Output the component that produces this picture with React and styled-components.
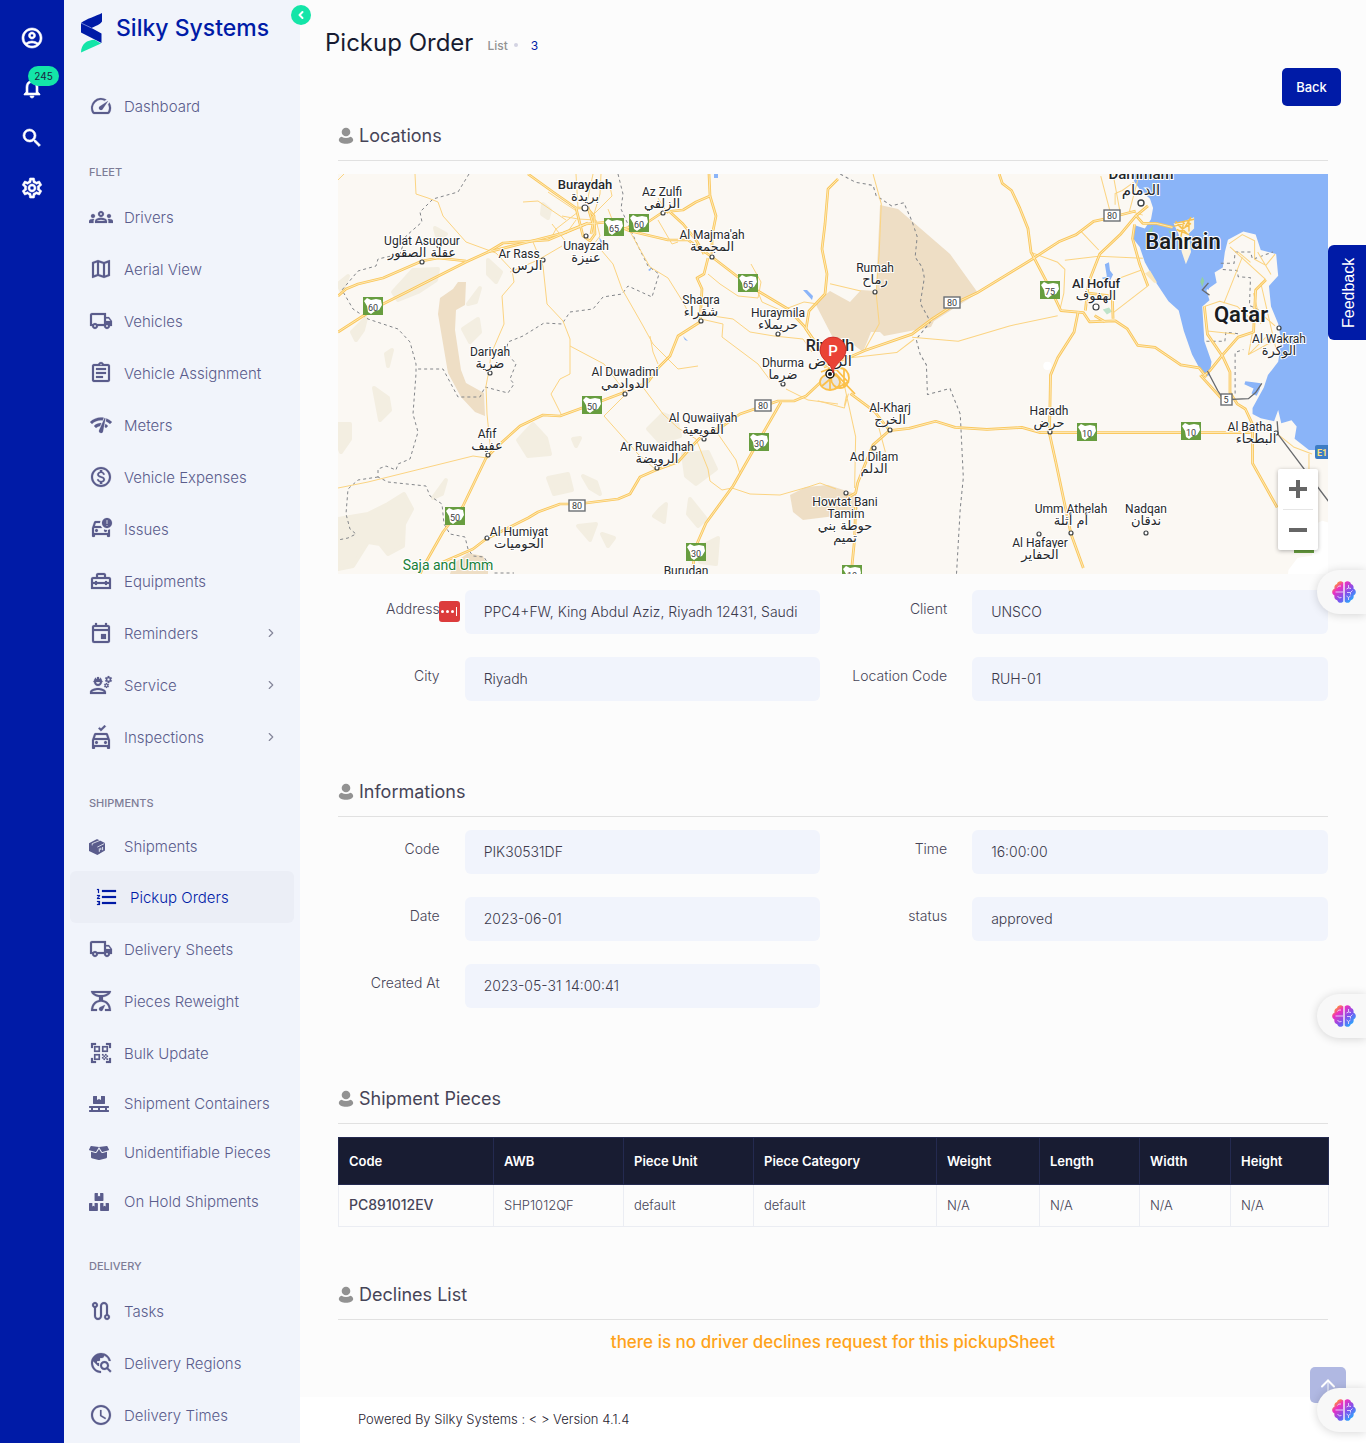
import React from 'react'
import styled, { createGlobalStyle } from 'styled-components'
import {
  MdOutlineAccountCircle,
  MdNotificationsNone,
  MdSearch,
  MdOutlineSettings,
  MdSpeed,
  MdOutlineGroups,
  MdOutlineMap,
  MdOutlineLocalShipping,
  MdOutlineAssignment,
  MdNetworkCheck,
  MdOutlineMonetizationOn,
  MdOutlineCarCrash,
  MdOutlineHomeRepairService,
  MdOutlineEvent,
  MdOutlineEngineering,
  MdOutlineNoCrash,
  MdFormatListNumbered,
  MdOutlineScale,
  MdQrCodeScanner,
  MdOutlineRoute,
  MdTravelExplore,
  MdAccessTime,
} from 'react-icons/md'
import { FaPallet, FaBoxOpen, FaBoxes } from 'react-icons/fa'
import { ChevronLeft, ChevronRight } from 'lucide-react'

const BoxIcon = () => (
  <svg width="16" height="16" viewBox="0 0 16 16" fill="currentColor">
    <path d="M0 4.2 7.6.3a1 1 0 0 1 .9 0L16 4v7.6L8.4 16 0 12z" />
    <path d="M3.2 6.4V4.6L11 1.4M8.3 8.1l7-3.5" fill="none" stroke="#f1f4fb" strokeWidth=".8" />
    <path d="M10.3 9.4v3.4M11.8 8.8v2.2M13.6 8v3.2" fill="none" stroke="#f1f4fb" strokeWidth=".9" />
  </svg>
)

const menu = [
  { items: [{ label: 'Dashboard', icon: MdSpeed }] },
  {
    title: 'Fleet',
    items: [
      { label: 'Drivers', icon: MdOutlineGroups },
      { label: 'Aerial View', icon: MdOutlineMap },
      { label: 'Vehicles', icon: MdOutlineLocalShipping },
      { label: 'Vehicle Assignment', icon: MdOutlineAssignment },
      { label: 'Meters', icon: MdNetworkCheck },
      { label: 'Vehicle Expenses', icon: MdOutlineMonetizationOn },
      { label: 'Issues', icon: MdOutlineCarCrash },
      { label: 'Equipments', icon: MdOutlineHomeRepairService },
      { label: 'Reminders', icon: MdOutlineEvent, more: true },
      { label: 'Service', icon: MdOutlineEngineering, more: true },
      { label: 'Inspections', icon: MdOutlineNoCrash, more: true },
    ],
  },
  {
    title: 'Shipments',
    items: [
      { label: 'Shipments', icon: BoxIcon, small: true },
      { label: 'Pickup Orders', icon: MdFormatListNumbered, active: true },
      { label: 'Delivery Sheets', icon: MdOutlineLocalShipping },
      { label: 'Pieces Reweight', icon: MdOutlineScale },
      { label: 'Bulk Update', icon: MdQrCodeScanner },
      { label: 'Shipment Containers', icon: FaPallet, small: true },
      { label: 'Unidentifiable Pieces', icon: FaBoxOpen, small: true },
      { label: 'On Hold Shipments', icon: FaBoxes, small: true },
    ],
  },
  {
    title: 'Delivery',
    items: [
      { label: 'Tasks', icon: MdOutlineRoute },
      { label: 'Delivery Regions', icon: MdTravelExplore },
      { label: 'Delivery Times', icon: MdAccessTime },
    ],
  },
]

const locationFields = [
  { id: 'address', label: 'Address', value: 'PPC4+FW, King Abdul Aziz, Riyadh 12431, Saudi', badge: true },
  { id: 'client', label: 'Client', value: 'UNSCO' },
  { id: 'city', label: 'City', value: 'Riyadh' },
  { id: 'location-code', label: 'Location Code', value: 'RUH-01' },
]

const infoFields = [
  { id: 'code', label: 'Code', value: 'PIK30531DF' },
  { id: 'time', label: 'Time', value: '16:00:00' },
  { id: 'date', label: 'Date', value: '2023-06-01' },
  { id: 'status', label: 'status', value: 'approved' },
  { id: 'created', label: 'Created At', value: '2023-05-31 14:00:41' },
]

const columns = [
  { name: 'Code', width: 155 },
  { name: 'AWB', width: 130 },
  { name: 'Piece Unit', width: 130 },
  { name: 'Piece Category', width: 183 },
  { name: 'Weight', width: 103 },
  { name: 'Length', width: 100 },
  { name: 'Width', width: 91 },
  { name: 'Height', width: 98 },
]

const piece = ['PC891012EV', 'SHP1012QF', 'default', 'default', 'N/A', 'N/A', 'N/A', 'N/A']

// ---- map data ----

const westMajor = [
  'M0 158 25 142 45 130 128 88 150 78 165 69 210 66 248 50 270 48 292 57 330 66 350 66 374 83 400 103 420 117 450 135 466 152 480 172 488 186 494 200',
  'M0 122 8 115 20 110 45 104 84 87 100 84 128 87',
  'M150 78 190 68 225 59 250 49',
  'M190 0 215 18 238 34 245 62 252 67 257 60 256 42 249 34 238 34',
  'M250 33 255 50 253 60',
  'M285 55 310 48 325 38 345 36 358 28 372 22 371 0',
  'M372 22 378 42 374 62 374 80',
  'M332 38 345 50 358 66 366 80',
  'M370 84 366 100 359 104 364 115 362 148 340 162 332 182 321 193 310 208 287 218 266 226 222 242 205 241 182 252 162 270 148 284 125 332 105 358 88 388 82 400',
  'M500 5 490 15 487 50 484 75 489 100 487 120 471 137 468 155 478 170 492 190',
  'M485 206 468 222 456 227 440 227 402 240 385 252 364 262 356 270 340 288 318 296 302 303 292 320 280 325 240 330 222 330 200 338 190 344 166 356 148 365 135 375 105 388',
  'M443 228 420 268 395 312 368 349 358 372 355 392',
]

const westMinor = [
  'M77 0 78 20 90 24 100 28 105 42 128 68 158 79 174 96 176 108 164 122 166 150 153 180 151 196 148 212 149 240 153 280',
  'M0 6 6 0',
  'M195 68 205 92 209 130 225 147 232 165 232 200 222 205 213 220 224 242',
  'M172 98 200 86 224 72',
  'M258 70 275 90 284 115 304 150 315 170 340 195 360 192',
  'M232 172 266 190 285 215 286 222 266 242 300 280 318 296',
  'M290 54 300 72 312 93 330 104 345 128 352 142',
  'M370 100 382 110 400 122 420 124 423 108 413 90',
  'M363 145 385 150 384 163 420 190 432 206',
  'M375 142 395 145 412 158 436 162 465 165 474 178',
  'M312 162 315 178 320 190',
  'M304 212 325 240 340 254 358 265 370 295 372 307 384 316 394 314 412 320 442 321 470 313 482 309 498 315',
  'M380 260 398 286 402 300',
  'M185 28 200 27 228 46 M210 18 240 38 218 55 212 66 M238 0 240 34 M255 0 248 33 M263 0 262 20 256 40 274 22 271 8 M270 35 276 50',
  'M224 42 240 45 258 46 262 62 256 70 M228 60 238 46 M214 50 228 68',
  'M320 46 334 70 340 68 M320 24 330 40',
  'M0 314 30 308 135 282 149 284',
  'M448 215 470 226 500 230 M450 134 466 128 480 130 M420 118 424 128 460 144',
]

const eastMajor = [
  'M-6 192 20 182 34 176 80 160 100 145 128 127 143 120 197 87 223 70 240 63 257 50 267 48 298 40',
  'M165 4 168 13 177 20 185 37 193 57 196 80 217 120 225 137 247 139 253 148 278 147 290 155 300 171 317 173 342 190 360 193 367 202',
  'M249 137 252 110 263 82 283 63 298 45 310 35',
  'M297 53 295 67 302 92 310 113',
  'M242 138 238 158 222 183 215 200 214 257 220 284 235 355 247 388',
  'M20 218 43 235 58 254 77 252 103 245 122 251 153 253 187 251 205 256 245 256 410 256',
  'M58 254 42 268 35 285 27 305 25 315 16 320M25 325 24 360 21 390',
  'M365 133 368 160 383 182 390 197 390 217 397 228 405 233 412 248 412 286 436 329',
  'M363 202 370 196 383 180 398 163 413 158 415 117 425 107',
  'M361 200 382 223',
  'M275 118 276 145 M252 120 275 123 M258 142 268 148',
  'M318 52 334 56 M298 44 305 52 318 52',
]

const eastMinor = [
  'M42 4 50 33 48 80 45 120 48 150 34 175',
  'M80 163 125 167 175 152 222 142M20 183 65 178 82 165',
  'M0 111 30 118',
  'M195 80 222 90 229 97 228 120 224 137M229 88 262 84 305 86M245 60 262 78',
  'M275 140 310 113M278 107 305 97',
  'M276 4 283 42M264 6 273 40M300 10 292 40 305 44M296 12 285 20 278 23 278 34',
  'M389 72 402 63 414 69 414 87 425 93 434 82M390 75 425 107M402 85 384 130M398 80 410 90M417 80 430 102',
  'M368 157 395 160M365 133 380 128 397 133 410 145M420 140 434 152M408 180 428 160M412 158 408 180 430 168',
  'M420 110 428 145 435 175M413 120 420 150',
  'M2 200 14 210 25 260 24 310M-12 225 14 232 18 218M46 245 54 275M14 230 16 220',
  'M437 258 452 270 470 277M467 277 467 294',
]

const cityStreets = 'M336 52 355 48M340 60 352 52M338 58 350 63M345 50 342 66M350 48 350 60M340 54 348 62M337 50 346 60M352 46 346 56M335 55 346 52'

const westBorders = [
  'M131 0 120 18 95 25 82 38 84 48 68 62 62 80 40 85 38 92 20 97 4 116 15 135 30 145 60 155 72 168 78 190 78 200 75 240 80 258 72 285 60 290 58 296 48 292 40 295 40 303 50 308 88 312 92 322 104 330 106 350 112 360 127 363 130 375 135 382 146 383 156 399 176 399',
  'M280 0 285 20 283 35 300 72 310 92 321 100 314 123 290 112 284 120 265 123 255 135 232 138 224 150 206 149 185 162 170 168 168 178 178 190 172 205 176 210 170 219 147 213 142 223 120 223 105 195 78 195',
  'M40 303 20 306 10 315 8 340 12 355 18 360 10 364 0 366',
]

const eastBorders = [
  'M10 4 25 12 42 15 45 25 60 35 72 32 80 50 85 65 83 85 90 95 92 105 88 130 98 148 84 165 88 180 94 190 95 219 117 213 127 238 130 300 127 330 123 400',
  'M381 91 394 91 395 80 410 80 412 87 432 80M383 97 397 98 398 104 410 105 409 132 425 140M367 167 385 167 386 158 400 160M395 218 395 178 403 175',
]

const deserts = [
  '115,115 120,108 128,108 127,131 118,136 117,156 123,196 128,209 146,219 147,242 137,238 123,223 110,199 100,140 102,124',
  '452,321 468,313 490,311 518,320 520,335 505,341 465,346 455,338',
  '115,390 130,379 145,382 150,394 150,400 112,400',
  '542,31 560,35 612,80 640,119 596,147 593,153 546,162 542,158 533,158 525,178 512,168 494,162 477,129 492,117 512,128 523,116 538,117',
]

const patches = [
  '55,118 75,96 100,95 98,106 80,118 60,126', '97,54 108,60 100,66', '150,86 163,98 158,108 150,100',
  '130,130 142,114 138,128', '14,158 28,144 25,156 18,166', '125,155 140,145 142,158 132,168',
  '48,180 54,176 50,192', '36,214 50,224 52,236 42,246', '0,250 12,250 12,265 3,278 0,270',
  '0,345 30,340 50,330 66,320 74,335 66,350 65,372 50,380 42,370 30,368 15,392 0,395',
  '180,266 195,250 208,264 212,280 190,282', '210,304 230,300 234,316 216,320', '245,302 258,308 262,320 252,314',
  '95,324 108,306 104,320', '310,255 325,240 338,245 342,262 322,268', '345,280 370,278 378,295 358,310 348,302',
  '322,335 328,330 326,348 316,342', '240,352 258,350 252,366', '264,360 276,364 270,372', '352,325 368,345 360,352 350,340',
  '364,372 380,364 378,390 362,388', '205,30 212,36 210,44 204,40', '0,110 10,102 4,118', '235,265 242,264 238,272',
]

const places = [
  { name: 'Buraydah', ar: 'بريدة', x: 247, y: 15, size: 13, bold: true, dot: [247, 34] },
  { name: 'Az Zulfi', ar: 'الزلفي', x: 324, y: 22, dot: [325, 39] },
  { name: 'Unayzah', ar: 'عنيزة', x: 248, y: 76, dot: [248, 62] },
  { name: 'Uglat Asugour', ar: 'عقلة الصقور', x: 84, y: 71, dot: [84, 88] },
  { name: 'Ar Rass', ar: 'الرس', x: 181, y: 84, arX: 189, dot: [205, 86] },
  { name: "Al Majma'ah", ar: 'المجمعة', x: 374, y: 65, dot: [374, 83] },
  { name: 'Rumah', ar: 'رماح', x: 537, y: 98, dot: [537, 118] },
  { name: 'Shaqra', ar: 'شقراء', x: 363, y: 130, dot: [363, 147] },
  { name: 'Huraymila', ar: 'حريملاء', x: 440, y: 143, dot: [440, 160] },
  { name: 'Dariyah', ar: 'ضرية', x: 152, y: 182, dot: [152, 199] },
  { name: 'Dhurma', ar: 'ضرما', x: 445, y: 193, dot: [445, 210] },
  { name: 'Al Duwadimi', ar: 'الدوادمي', x: 287, y: 202, dot: [287, 220] },
  { name: 'Al Quwaiiyah', ar: 'القويعية', x: 365, y: 248, dot: [366, 265] },
  { name: 'Ar Ruwaidhah', ar: 'الرويضة', x: 319, y: 277, dot: [319, 294] },
  { name: 'Afif', ar: 'عفيف', x: 149, y: 264, dot: [150, 281] },
  { name: 'Al Humiyat', ar: 'الحوميات', x: 181, y: 362, arX: 181, dot: [149, 364] },
  { name: 'Al-Kharj', ar: 'الخرج', x: 552, y: 238, dot: [552, 256] },
  { name: 'Ad Dilam', ar: 'الدلم', x: 536, y: 287, dot: [536, 274] },
  { name: 'Haradh', ar: 'حرض', x: 711, y: 241, dot: [712, 258] },
  { name: 'Al Hofuf', ar: 'الهفوف', x: 758, y: 114, size: 13, bold: true, dot: [758, 133] },
  { name: 'Al Wakrah', ar: 'الوكرة', x: 941, y: 169, dot: [941, 154] },
  { name: 'Al Batha', ar: 'البطحاء', x: 912, y: 257, arX: 918, dot: [938, 259] },
  { name: 'Umm Athelah', ar: 'أم أثلة', x: 733, y: 339, dot: [733, 359] },
  { name: 'Nadqan', ar: 'ندقان', x: 808, y: 339, dot: [808, 359] },
  { name: 'Al Hafayer', ar: 'الحفاير', x: 702, y: 373, dot: [701, 360] },
]

const shields = [
  [35, 132, 60], [276, 53, 65], [301, 49, 60], [410, 109, 65], [254, 231, 50], [421, 268, 30], [117, 342, 50],
  [358, 378, 30], [514, 400, 10], [712, 116, 75], [749, 258, 10], [853, 257, 10],
]

const roadSigns = [[774, 41, 80], [614, 128, 80], [425, 231, 80], [239, 331, 80], [888, 225, 5]]

const Roads = ({ major, minor, borders }) => (
  <g fill="none" strokeLinejoin="round">
    {borders.map((d) => <path key={d} d={d} stroke="#83868a" strokeDasharray="3 3" />)}
    {minor.map((d) => <path key={d} d={d} stroke="#fbd482" strokeWidth="1" />)}
    {major.map((d) => <path key={d} d={d} stroke="#fac75c" strokeWidth="2.7" />)}
    {major.map((d) => <path key={d} d={d} stroke="#fdecc0" strokeWidth=".9" />)}
  </g>
)

const RegionMap = () => (
  <MapCanvas viewBox="0 0 990 400" preserveAspectRatio="xMidYMid slice" role="img" aria-label="Map of pickup locations">
    <rect width="990" height="400" fill="#fbf8f3" />
    {patches.map((p) => <polygon key={p} points={p} fill="#f3eee1" strokeLinejoin="round" stroke="#f3eee1" strokeWidth="4" />)}
    {deserts.map((p) => <polygon key={p} points={p} fill="#eedec5" />)}
    <path d="M376 0h4v4h-4zM465 116l4 0 6 6-1 4zM261 63l3 4-1 5zM310 96l4-3-2 4zM345 162l5 5-3-1z" fill="#8ab4f8" />
    <g transform="translate(492 -4) scale(1.0256)">
      <path
        d="M294 4 297 12 303 20 312 28 315 37 313 48 307 57 298 54 295 66 302 75 307 90 318 110 330 128 340 137 345 157 353 180 365 202 370 200 372 187 365 167 363 133 370 127 367 117 377 110 375 100 383 95 385 80 388 68 403 60 415 63 420 78 435 82 437 103 428 113 430 133 437 150 440 167 437 187 427 200 423 212 412 232 412 238 420 242 433 245 437 234 440 247 450 244 455 250 453 262 467 273 486 273 500 273 500 0 294 0z"
        fill="#8ab4f8"
      />
      <path d="M268 92l4-2 1 8 3 4-3 6-7-2-1-1 5-1zM405 206l8 1 7 1-1 6-3 6-5-2 2-5-9-4zM367 106l4 5-2 6-3-4z" fill="#8ab4f8" />
      <path d="M335 52 345 50 355 46 355 57 350 62 352 80 347 92 343 80 340 63z" fill="#fbf3df" />
      <path d="M312 98l7 12-3 0-9-9z" fill="#f9e7bd" />
      <path d="M310 60l5-6-1 7-4 7zM330 58l4 4-3 0zM363 104l2 4-2 6-2-5z" fill="#93cfa5" />
      <path d="M266 136l6-2 3 4-5 3z" fill="#bfe3c9" />
      <circle cx="212" cy="191" r="4" fill="#fff" />
      <path d="M474 345 480 342 490 345 490 410 445 410 447 390 456 378 470 376z" fill="#fff" />
      <Roads major={eastMajor} minor={eastMinor} borders={eastBorders} />
      <path d={cityStreets} fill="none" stroke="#f6c04f" strokeWidth="1.4" />
      <path d="M368 196 378 215 384 224 408 223 415 217 421 208M436 245 437 258 486 323M369 110 363 117 370 122" fill="none" stroke="#686a6d" strokeWidth="1.3" />
    </g>
    <Roads major={westMajor} minor={westMinor} borders={westBorders} />
    <g fill="none" stroke="#fbc04a" strokeWidth="1.8">
      <ellipse cx="492" cy="208" rx="10" ry="8" fill="#e8e6e2" />
      <ellipse cx="502" cy="204" rx="9" ry="10" />
      <path d="M483 198 496 193 510 208 497 215M484 212 498 200 517 220M492 216V195M506 213V195" />
    </g>

    <rect x="956" y="362" width="20" height="17" fill="#679d3f" />
    {shields.map(([x, y, n]) => (
      <g key={`${x}-${y}`} transform={`translate(${x} ${y})`}>
        <rect x="-10" y="-9" width="20" height="18" fill="#679d3f" />
        <path d="M-9-5-6-8-2-6 3-7 8-6 9-1 6 4 2 5-2 8-5 6-6 0z" fill="#fff" />
        <ShieldText y="5">{n}</ShieldText>
      </g>
    ))}
    {roadSigns.map(([x, y, n]) => (
      <g key={`${x}-${y}`} transform={`translate(${x} ${y})`}>
        <rect x={n > 9 ? -8 : -5} y="-5" width={n > 9 ? 16 : 11} height="11" fill="#fff" stroke="#6c6f73" strokeWidth="1.4" />
        <ShieldText y="4">{n}</ShieldText>
      </g>
    ))}
    <rect x="977" y="271" width="18" height="14" rx="2" fill="#3d7cc4" />
    <RouteText x="984" y="282">E1</RouteText>

    {places.map((p) => (
      <g key={p.name}>
        <circle cx={p.dot[0]} cy={p.dot[1]} r={p.bold ? 3 : 2} fill="#fff" stroke="#3c4043" strokeWidth="1.2" />
        <PlaceText x={p.x} y={p.y} $size={p.size} $bold={p.bold}>{p.name}</PlaceText>
        <ArabicText x={p.arX || p.x} y={p.y + 12} $size={13}>{p.ar}</ArabicText>
      </g>
    ))}
    <PlaceText x="803" y="5" $size={15} $bold>Dammam</PlaceText>
    <ArabicText x="803" y="21" $size={15}>الدمام</ArabicText>
    <circle cx="803" cy="29" r="3" fill="#fff" stroke="#3c4043" strokeWidth="1.4" />
    <CountryText x="845" y="75">Bahrain</CountryText>
    <CountryText x="903" y="148">Qatar</CountryText>
    <PlaceText x="492" y="177" $size={16} $bold>Riyadh</PlaceText>
    <ArabicText x="492" y="192" $size={15}>الرياض</ArabicText>
    <PlaceText x="507" y="332">Howtat Bani</PlaceText>
    <PlaceText x="508" y="344">Tamim</PlaceText>
    <ArabicText x="507" y="356" $size={13}>حوطة بني</ArabicText>
    <ArabicText x="507" y="368" $size={13}>تميم</ArabicText>
    <circle cx="508" cy="319" r="2" fill="#fff" stroke="#3c4043" strokeWidth="1.2" />
    <PlaceText x="110" y="396" $size={14} $green>Saja and Umm</PlaceText>
    <PlaceText x="348" y="401">Burudan</PlaceText>

    <circle cx="492" cy="200" r="4" fill="#fff" stroke="#111" strokeWidth="1.4" />
    <circle cx="492" cy="200" r="2" fill="#111" />
    <path d="M495 199C494 189 482 186 482 176a13 13 0 0 1 26 0c0 10-12 13-13 23z" fill="#ea4335" stroke="#c5221f" strokeWidth=".8" />
    <PinText x="495" y="182">P</PinText>
  </MapCanvas>
)

const PersonIcon = () => (
  <svg width="16" height="18" viewBox="0 0 16 18" fill="#929292">
    <circle cx="8" cy="5" r="4.3" />
    <path d="M3.5 9.7Q8 12.4 12.5 9.7C14 10 15.2 11.6 15.2 13c0 2.4-3.5 3.8-7.2 3.8S.8 15.4.8 13c0-1.4 1.2-3 2.7-3.3z" />
  </svg>
)

const Logo = () => (
  <svg width="23" height="40" viewBox="0 0 23 40">
    <path d="M22 0C16 3 6 6 1 10v9.5L21.500 30V20.500L11.500 15C16 12.500 19.500 12 22 8.500z" fill="#001ba7" />
    <path d="M1 10 11.5 15" stroke="#8d9ce0" strokeWidth=".8" />
    <path d="M14.5 26.800C7 27 1 31 1 39.500L21 30.500z" fill="#14e5a8" />
  </svg>
)

const ToTopIcon = () => (
  <svg width="20" height="20" viewBox="0 0 20 20" fill="none" stroke="currentColor" strokeWidth="2" strokeLinecap="round">
    <path d="M10 8v10" opacity=".45" />
    <path d="M4 11.5 10 5.5l6 6" />
  </svg>
)

const BrainIcon = ({ id }) => (
  <svg width="24" height="24" viewBox="0 0 24 24">
    <defs>
      <linearGradient id={id} x1="0" y1="0" x2="1" y2="1">
        <stop offset=".1" stopColor="#ffa51f" />
        <stop offset=".3" stopColor="#ee2fc0" />
        <stop offset=".6" stopColor="#7a55ee" />
        <stop offset=".9" stopColor="#1fb4ff" />
      </linearGradient>
    </defs>
    <path
      d="M11.3 2.5C9 .3 5.5 1.5 5 4 2.8 4.5 2 6.5 2.6 8.5-.6 10-.6 14 2.4 15.5 2 18 3.2 19.8 5.2 20.2 6 23 9.500 23.600 11.300 21.500zM12.700 2.500C15 .3 18.500 1.500 19 4c2.200.5 3 2.500 2.400 4.500 3.200 1.500 3.200 5.500.2 7 .4 2.500-.8 4.300-2.800 4.700-.8 2.800-4.300 3.400-6.100 1.300z"
      fill={`url(#${id})`}
    />
    <path d="M3.5 12H11M5.500 7.500Q6 5.500 9 6M5.500 16Q7 19 9.500 17.500M16.500 5v3l-2 1M16.500 8l2.500.5M15 12.500h3.500l2-2M18.500 12.500v2M14.500 16l2 1.500 2-1.500M16.500 17.500V20" fill="none" stroke="#e9d8ff" strokeWidth=".9" />
  </svg>
)

const Fields = ({ fields }) => (
  <FieldGrid>
    {fields.map((f) => (
      <React.Fragment key={f.id}>
        <FieldLabel htmlFor={f.id}>
          {f.label}
          {f.badge && <FillBadge aria-hidden="true"><i /><i /><i /><b /></FillBadge>}
        </FieldLabel>
        <FieldInput id={f.id} defaultValue={f.value} readOnly />
      </React.Fragment>
    ))}
  </FieldGrid>
)

const Section = ({ title, children }) => (
  <Card>
    <CardTitle>
      <PersonIcon />
      {title}
    </CardTitle>
    {children}
  </Card>
)

const App = () => {
  return (
    <Shell>
      <GlobalStyle />
      <Rail>
        <RailButton aria-label="Account"><MdOutlineAccountCircle size={24} /></RailButton>
        <RailButton aria-label="Notifications">
          <MdNotificationsNone size={24} />
          <Count>245</Count>
        </RailButton>
        <RailButton aria-label="Search"><MdSearch size={24} /></RailButton>
        <RailButton aria-label="Settings"><MdOutlineSettings size={24} /></RailButton>
      </Rail>

      <Sidebar>
        <Brand>
          <Logo />
          <BrandName>Silky Systems</BrandName>
        </Brand>
        <Collapse aria-label="Collapse menu"><ChevronLeft size={12} strokeWidth={4} /></Collapse>
        <nav>
          {menu.map((group) => (
            <React.Fragment key={group.title || 'top'}>
              {group.title && <GroupTitle>{group.title}</GroupTitle>}
              {group.items.map(({ label, icon: Icon, small, active, more }) => (
                <MenuLink href="#" key={label} $small={small} $active={active}>
                  <IconSlot $small={small}><Icon size={small ? 20 : 24} /></IconSlot>
                  {label}
                  {more && <More size={14} />}
                </MenuLink>
              ))}
            </React.Fragment>
          ))}
        </nav>
      </Sidebar>

      <Main>
        <PageHeader>
          <PageTitle>Pickup Order</PageTitle>
          <Crumbs>
            <CrumbLink href="#">List</CrumbLink>
            <CrumbDot />
            <Current href="#">3</Current>
          </Crumbs>
        </PageHeader>
        <Actions>
          <BackButton>Back</BackButton>
        </Actions>

        <Section title="Locations">
          <MapBox>
            <RegionMap />
            <ZoomControl>
              <ZoomButton aria-label="Zoom in"><ZoomBar /><ZoomBar $upright /></ZoomButton>
              <ZoomButton aria-label="Zoom out"><ZoomBar /></ZoomButton>
            </ZoomControl>
          </MapBox>
          <Fields fields={locationFields} />
        </Section>

        <Section title="Informations">
          <Fields fields={infoFields} />
        </Section>

        <Section title="Shipment Pieces">
          <PieceTable>
            <colgroup>
              {columns.map((c) => <col key={c.name} width={c.width} />)}
            </colgroup>
            <thead>
              <tr>{columns.map((c) => <HeadCell key={c.name}>{c.name}</HeadCell>)}</tr>
            </thead>
            <tbody>
              <tr>{piece.map((v, i) => <Cell key={i} $strong={i === 0}>{v}</Cell>)}</tr>
            </tbody>
          </PieceTable>
        </Section>

        <Section title="Declines List">
          <Notice>there is no driver declines request for this pickupSheet</Notice>
        </Section>

        <Footer>Powered By Silky Systems : &lt; &gt; Version 4.1.4</Footer>
      </Main>

      <FeedbackTab>Feedback</FeedbackTab>
      <ToTop aria-label="Scroll to top"><ToTopIcon /></ToTop>
      <Assistant aria-label="Assistant" $top={570}><BrainIcon id="brain1" /></Assistant>
      <Assistant aria-label="Assistant" $top={994}><BrainIcon id="brain2" /></Assistant>
      <Assistant aria-label="Assistant" $top={1388}><BrainIcon id="brain3" /></Assistant>
    </Shell>
  )
}

export default App

const GlobalStyle = createGlobalStyle`
  * {
    box-sizing: border-box;
  }
  body {
    margin: 0;
    background: #fff;
    color: #464457;
    font-family: Inter, sans-serif;
    font-size: 14px;
  }
  button, input {
    font-family: inherit;
  }
  a {
    text-decoration: none;
  }
`

const Shell = styled.div`
  display: flex;
  position: relative;
  overflow-x: hidden;
`

const Rail = styled.aside`
  flex: none;
  width: 64px;
  padding-top: 13px;
  background: #001ba7;
`

const RailButton = styled.button`
  display: flex;
  align-items: center;
  justify-content: center;
  position: relative;
  width: 100%;
  height: 50px;
  padding: 0;
  border: 0;
  background: none;
  color: #fff;

  svg {
    stroke-width: 0.6;
  }

  path[fill='none'] {
    stroke: none;
  }
`

const Count = styled.span`
  position: absolute;
  top: 3px;
  right: 5px;
  width: 31px;
  border-radius: 10px;
  background: #14e5a8;
  color: #1b2440;
  font-size: 10px;
  line-height: 20px;
`

const Sidebar = styled.aside`
  flex: none;
  position: relative;
  width: 236px;
  padding-bottom: 2px;
  background: #f1f4fb;
`

const Brand = styled.div`
  display: flex;
  gap: 13px;
  height: 80px;
  padding: 13px 16px;
`

const BrandName = styled.span`
  color: #001ba7;
  font-size: 23px;
  font-weight: 500;
  line-height: 30px;
  white-space: nowrap;
`

const Collapse = styled.button`
  display: flex;
  align-items: center;
  justify-content: center;
  position: absolute;
  top: 5px;
  right: -11px;
  width: 20px;
  height: 20px;
  padding: 0;
  border: 0;
  border-radius: 50%;
  background: #14e5a8;
  color: #fff;
`

const GroupTitle = styled.div`
  height: 59px;
  padding: 33px 25px 0;
  color: #7d7c96;
  font-size: 11px;
  font-weight: 500;
  line-height: 14px;
  text-transform: uppercase;
`

const MenuLink = styled.a`
  display: flex;
  align-items: center;
  gap: 11px;
  height: ${(p) => (p.$small ? '49px' : '52px')};
  margin: ${(p) => (p.$active ? '0 6px' : '0')};
  padding: 0 22px 0 25px;
  border-radius: 6px;
  background: ${(p) => (p.$active ? '#ebeef6' : 'none')};
  color: ${(p) => (p.$active ? '#001ba7' : '#5a5c8c')};
  font-weight: 300;
  font-size: 15px;
  white-space: nowrap;
`

const IconSlot = styled.span`
  display: flex;
  flex: none;
  width: 24px;

  svg {
    stroke-width: ${(p) => (p.$small ? 0 : 0.2)};
  }

  ${(p) => !p.$small && `
    path[fill='none'] {
      stroke: none;
    }
  `}
`

const More = styled(ChevronRight)`
  margin-left: auto;
  color: #85869a;
`

const Main = styled.main`
  display: flex;
  flex: 1;
  flex-direction: column;
  min-width: 0;
  background: #fcfcfc;
`

const PageHeader = styled.header`
  display: flex;
  align-items: center;
  gap: 14px;
  height: 68px;
  padding: 16px 25px 0;
`

const PageTitle = styled.h1`
  margin: 0;
  color: #181c32;
  font-size: 24px;
  font-weight: 400;
`

const Crumbs = styled.nav`
  display: flex;
  align-items: center;
  gap: 6px;
  padding-top: 6px;
  font-size: 12px;
`

const CrumbLink = styled.a`
  color: #929292;
  font-weight: 500;
`

const CrumbDot = styled.span`
  width: 4px;
  height: 4px;
  border-radius: 50%;
  background: #d3d3e2;
`

const Current = styled.a`
  padding-left: 7px;
  color: #001ba7;
`

const Actions = styled.div`
  display: flex;
  justify-content: flex-end;
  height: 43px;
  padding: 0 25px;
`

const BackButton = styled.button`
  width: 59px;
  height: 38px;
  padding: 0;
  border: 0;
  border-radius: 5px;
  background: #001ba7;
  color: #fff;
  font-size: 13px;
  font-weight: 500;
`

const Card = styled.section`
  margin: 0 38px 43px;
`

const CardTitle = styled.h2`
  display: flex;
  align-items: center;
  gap: 5px;
  height: 50px;
  margin: 0 0 13px;
  border-bottom: 1px solid #e1e1e1;
  color: #464457;
  font-size: 18px;
  font-weight: 400;
`

const MapBox = styled.div`
  position: relative;
  height: 400px;
  margin-bottom: 16px;
`

const MapCanvas = styled.svg`
  display: block;
  width: 100%;
  height: 100%;
`

const PlaceText = styled.text`
  fill: ${(p) => (p.$green ? '#188038' : '#26282b')};
  stroke: #fff;
  stroke-width: 2px;
  paint-order: stroke;
  font-family: Roboto, sans-serif;
  font-size: ${(p) => p.$size || 12}px;
  font-weight: ${(p) => (p.$bold ? 500 : 400)};
  text-anchor: middle;
`

const CountryText = styled(PlaceText)`
  fill: #1b1d1f;
  font-size: 22px;
  font-weight: 600;
`

const ArabicText = styled(PlaceText)`
  font-family: 'DejaVu Sans', sans-serif;
`

const ShieldText = styled.text`
  fill: #3c4043;
  font-family: Roboto, sans-serif;
  font-size: 9px;
  text-anchor: middle;
`

const RouteText = styled(ShieldText)`
  fill: #ffe27a;
  font-weight: 700;
`

const PinText = styled(ShieldText)`
  fill: #fff;
  font-size: 15px;
  font-weight: 500;
`

const ZoomControl = styled.div`
  position: absolute;
  right: 10px;
  bottom: 24px;
  width: 40px;
  border-radius: 2px;
  background: #fff;
  box-shadow: 0 1px 4px rgba(0, 0, 0, 0.3);
`

const ZoomButton = styled.button`
  display: grid;
  place-items: center;
  width: 30px;
  height: 40px;
  margin: 0 5px;
  padding: 0;
  border: 0;
  background: none;

  & + & {
    height: 41px;
    border-top: 1px solid #e6e6e6;
  }
`

const ZoomBar = styled.span`
  grid-area: 1 / 1;
  width: ${(p) => (p.$upright ? '4px' : '18px')};
  height: ${(p) => (p.$upright ? '18px' : '4px')};
  background: #666;
`

const FieldGrid = styled.div`
  display: grid;
  grid-template-columns: minmax(0, 2fr) minmax(0, 7fr) minmax(0, 2fr) minmax(0, 7fr);
  gap: 23px 25px;
  padding-bottom: 23px;
`

const FieldLabel = styled.label`
  position: relative;
  padding-top: 10px;
  font-size: 14px;
  font-weight: 300;
  line-height: 18px;
  text-align: right;
  white-space: nowrap;
`

const FillBadge = styled.span`
  display: flex;
  align-items: center;
  justify-content: center;
  gap: 2px;
  position: absolute;
  top: 11px;
  right: -20px;
  width: 21px;
  height: 21px;
  border-radius: 3px;
  background: #dc3c3c;

  i {
    width: 3px;
    height: 3px;
    border-radius: 50%;
    background: #fff;
  }

  b {
    width: 1px;
    height: 9px;
    background: #fff;
  }
`

const FieldInput = styled.input`
  width: 100%;
  height: 44px;
  padding: 0 12px 1px 19px;
  border: 0;
  border-radius: 6px;
  background: #f1f4fc;
  color: #3b394b;
  font-size: 14px;
  font-weight: 300;
`

const PieceTable = styled.table`
  width: 100%;
  table-layout: fixed;
  border-collapse: collapse;
`

const HeadCell = styled.th`
  height: 47px;
  padding: 0 10px;
  border: 1px solid #242a50;
  background: #181c32;
  color: #fff;
  font-size: 13px;
  font-weight: 600;
  text-align: left;
`

const Cell = styled.td`
  height: 42px;
  padding: 0 10px 2px;
  border: 1px solid #ebedf3;
  font-size: ${(p) => (p.$strong ? '14px' : '13px')};
  font-weight: ${(p) => (p.$strong ? 500 : 300)};
`

const Notice = styled.p`
  margin: 0;
  color: #ffa31a;
  font-size: 17px;
  font-weight: 500;
  line-height: 18px;
  text-align: center;
`

const Footer = styled.footer`
  margin-top: auto;
  padding: 12px 58px 14px;
  background: #fff;
  color: #1f2230;
  font-size: 13px;
  font-weight: 300;
  line-height: 20px;
`

const FeedbackTab = styled.button`
  position: absolute;
  top: 245px;
  right: 0;
  width: 38px;
  height: 95px;
  padding: 0 4px 0 0;
  border: 0;
  border-radius: 0 6px 6px 0;
  background: #001ba7;
  color: #fff;
  font-family: 'Liberation Sans', sans-serif;
  font-size: 16px;
  writing-mode: vertical-rl;
  transform: rotate(180deg);
`

const ToTop = styled.button`
  display: flex;
  align-items: center;
  justify-content: center;
  position: absolute;
  top: 1367px;
  right: 20px;
  width: 36px;
  height: 36px;
  padding: 0;
  border: 0;
  border-radius: 5px;
  background: #b0b8e2;
  color: #fff;
`

const Assistant = styled.button`
  display: flex;
  align-items: center;
  position: absolute;
  top: ${(p) => p.$top}px;
  right: 0;
  width: 49px;
  height: 44px;
  padding: 0 0 0 15px;
  border: 0;
  border-radius: 22px 0 0 22px;
  background: #f8f8f8;
  box-shadow: 0 1px 10px rgba(0, 0, 0, 0.16);
`
